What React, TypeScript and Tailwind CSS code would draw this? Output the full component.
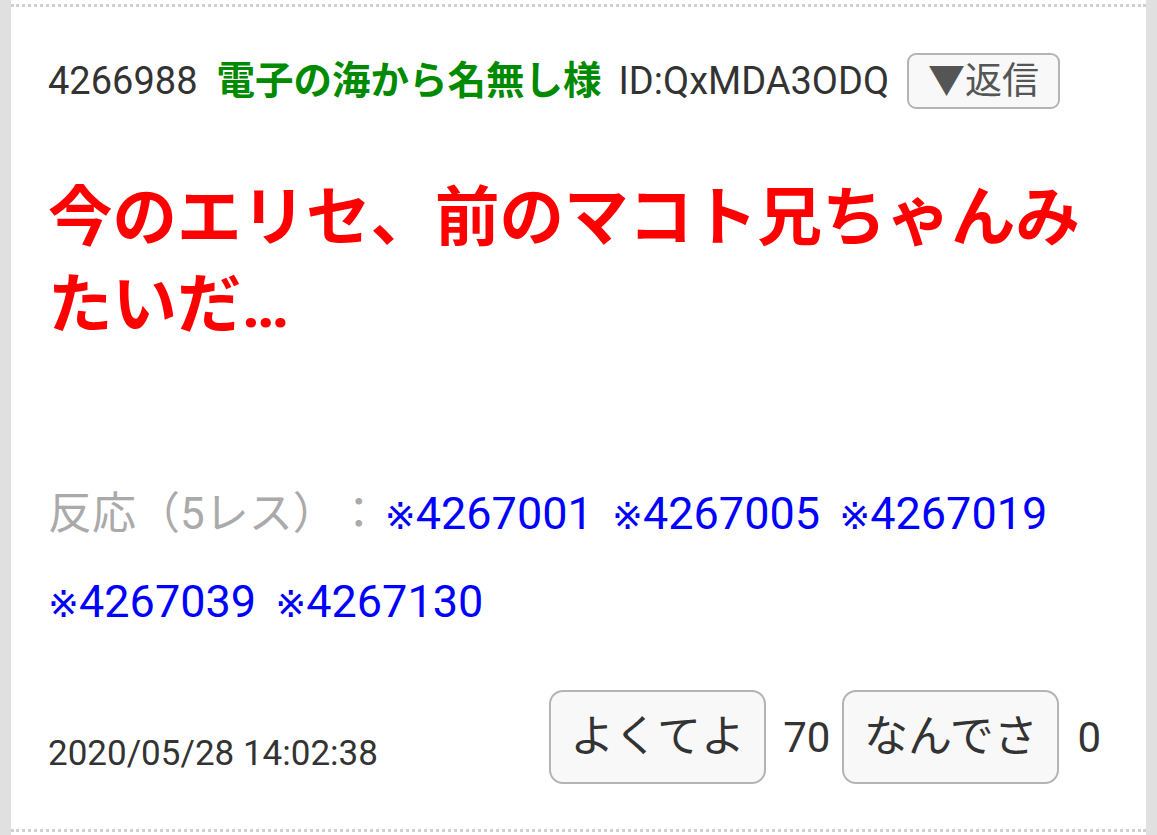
import React from "react";

const links = ["4267001", "4267005", "4267019", "4267039", "4267130"];

const VoteButton = ({ label }: { label: string }) => (
  <button className="h-[94px] w-[217px] rounded-[14px] border-2 border-[#b4b4b4] bg-[#f8f8f8] text-[44px] text-[#333]">
    {label}
  </button>
);

export default function App() {
  return (
    <div className="flex h-[835px] bg-[#e0e0e0] px-[11px] font-['Roboto','Noto_Sans_CJK_JP',sans-serif]">
      <div className="flex-1 bg-white pt-[4px]">
        <div className="border-y-[3px] border-dotted border-[#d0d0d0] px-[37px] pt-[46px] pb-[45px]">
          <div className="flex items-center text-[38px] leading-none">
            <span className="text-[#333]">4266988</span>
            <span className="ml-[19px] text-[38.5px] font-bold text-[#008a00]">電子の海から名無し様</span>
            <span className="ml-[17px] text-[#333]">ID:QxMDA3ODQ</span>
            <button className="ml-[18px] h-[56px] rounded-[9px] border-2 border-[#b4b4b4] bg-[#f8f8f8] px-[19px] text-[37px] text-[#555]">
              ▼返信
            </button>
          </div>

          <div className="mt-[66px] text-[64.5px] font-bold leading-[87px] text-[#ff0000]">
            今のエリセ、前のマコト兄ちゃんみたいだ…
          </div>

          <div className="mt-[122px] text-[44px] leading-[85px] [text-spacing-trim:space-all]">
            <span className="text-[#aaa]">反応（5レス）：</span>
            <span className="ml-[4px]" />
            {links.map((l) => (
              <span key={l} className="mr-[8px] text-[45px] text-[#0000ff]">
                <span className="font-['DejaVu_Sans'] text-[37px]">※</span>
                {l}{" "}
              </span>
            ))}
          </div>

          <div className="mt-[43px] flex items-end">
            <span className="mb-[4px] text-[35px] text-[#333]">2020/05/28 14:02:38</span>
            <div className="ml-auto flex items-center text-[42px] text-[#333]">
              <VoteButton label="よくてよ" />
              <span className="pl-[17px] pr-[12px]">70</span>
              <VoteButton label="なんでさ" />
              <span className="pl-[18px] pr-[8px]">0</span>
            </div>
          </div>
        </div>
      </div>
    </div>
  );
}
